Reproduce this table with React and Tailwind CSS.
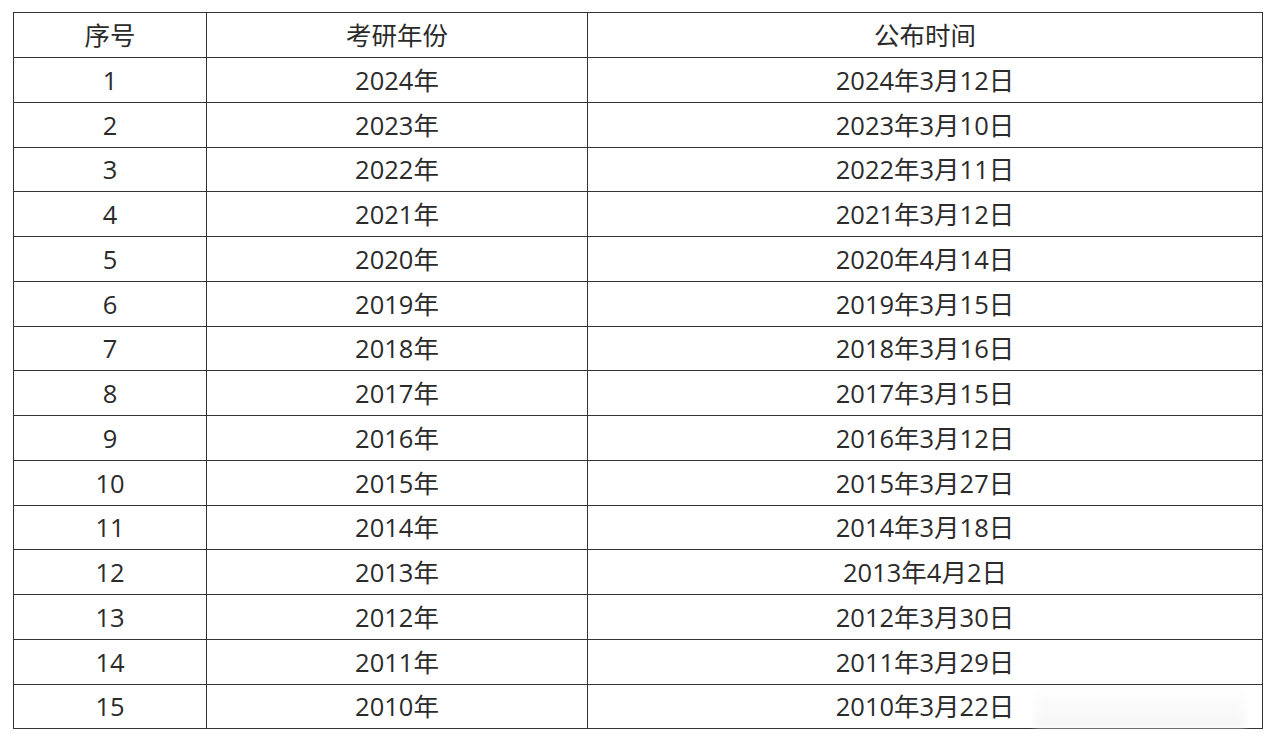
const rows = [
  ["1", "2024年", "2024年3月12日"],
  ["2", "2023年", "2023年3月10日"],
  ["3", "2022年", "2022年3月11日"],
  ["4", "2021年", "2021年3月12日"],
  ["5", "2020年", "2020年4月14日"],
  ["6", "2019年", "2019年3月15日"],
  ["7", "2018年", "2018年3月16日"],
  ["8", "2017年", "2017年3月15日"],
  ["9", "2016年", "2016年3月12日"],
  ["10", "2015年", "2015年3月27日"],
  ["11", "2014年", "2014年3月18日"],
  ["12", "2013年", "2013年4月2日"],
  ["13", "2012年", "2012年3月30日"],
  ["14", "2011年", "2011年3月29日"],
  ["15", "2010年", "2010年3月22日"],
];

export default function App() {
  return (
    <div className="w-[1273px] h-[742px] bg-white relative overflow-hidden" style={{ fontFamily: '"Open Sans", "Noto Sans CJK SC", sans-serif' }}>
      <div className="pt-[12px] pl-[13px]">
        <table className="border-collapse text-[25.5px] text-[#2b2b2b] w-[1250px]">
          <thead>
            <tr className="h-[45px]">
              <th className="border border-[#333] font-normal w-[193px] p-0">序号</th>
              <th className="border border-[#333] font-normal w-[381px] p-0">考研年份</th>
              <th className="border border-[#333] font-normal p-0">公布时间</th>
            </tr>
          </thead>
          <tbody>
            {rows.map((r) => (
              <tr key={r[0]} className="h-[44.75px]">
                <td className="border border-[#333] text-center p-0">{r[0]}</td>
                <td className="border border-[#333] text-center p-0">{r[1]}</td>
                <td className="border border-[#333] text-center p-0">{r[2]}</td>
              </tr>
            ))}
          </tbody>
        </table>
      </div>
      <div className="absolute left-[1035px] top-[690px] w-[210px] h-[38px] bg-gradient-to-b from-[#fdfdfd] to-[#f3f3f3] blur-[3px] opacity-70" />
    </div>
  );
}
